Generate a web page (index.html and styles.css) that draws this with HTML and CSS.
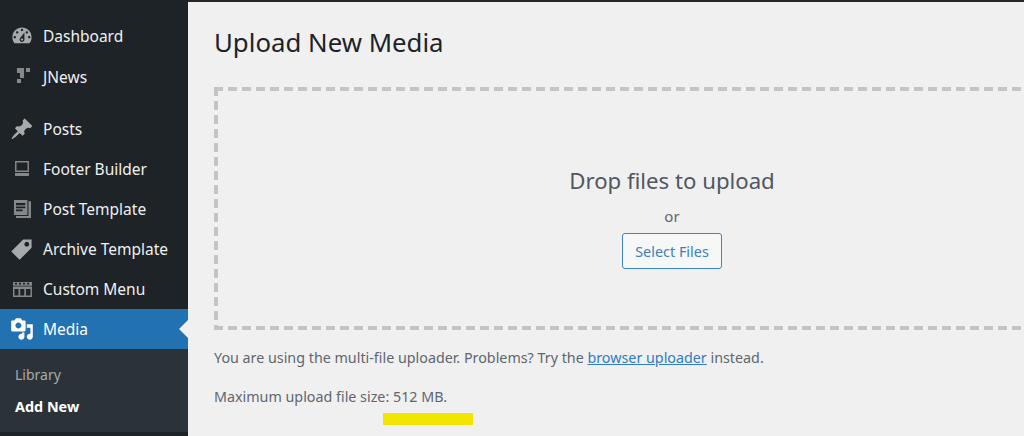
FILE: index.html

```html
<!DOCTYPE html>
<html lang="en">
<head>
    <meta charset="UTF-8">
    <meta name="viewport" content="width=device-width, initial-scale=1.0">
    <title>Upload New Media</title>
    <link rel="stylesheet" href="styles.css">
</head>
<body>
    <div class="page">
      <!-- admin menu -->
      <nav class="sidebar">
        <a class="menuItem firstItem">
          <svg class="menuIcon" viewBox="0 0 20 20"><path fill-rule="evenodd" d="M3.76 16h12.48c1.1-1.37 1.76-3.11 1.76-5 0-4.42-3.58-8-8-8s-8 3.58-8 8c0 1.89.66 3.63 1.76 5zM10 4c.55 0 1 .45 1 1s-.45 1-1 1-1-.45-1-1 .45-1 1-1zM6 6c.55 0 1 .45 1 1s-.45 1-1 1-1-.45-1-1 .45-1 1-1zm8 0c.55 0 1 .45 1 1s-.45 1-1 1-1-.45-1-1 .45-1 1-1zm-5.37 5.55L12 7v6c0 1.1-.9 2-2 2s-2-.9-2-2c0-.57.24-1.08.63-1.45zM4 10c.55 0 1 .45 1 1s-.45 1-1 1-1-.45-1-1 .45-1 1-1zm12 0c.55 0 1 .45 1 1s-.45 1-1 1-1-.45-1-1 .45-1 1-1zm-5 3c0-.55-.45-1-1-1s-1 .45-1 1 .45 1 1 1 1-.45 1-1z"/></svg>
          <span>Dashboard</span>
        </a>
        <a class="menuItem jnewsItem">
          <svg class="menuIcon dimIcon" viewBox="0 0 20 20"><path d="M5.800 2.500h5.900v8.300H8.300V6.700H5.800zM13.300 2.500h3.400v3.300h-3.400zM5.800 11.700h3.400V15H5.800z"/></svg>
          <span>JNews</span>
        </a>
        <a class="menuItem postsItem">
          <svg class="menuIcon" viewBox="0 0 20 20"><path d="M10.44 3.02l1.82-1.82 6.36 6.35-1.83 1.82c-1.05-.68-2.48-.57-3.41.36l-.75.75c-.92.93-1.04 2.35-.35 3.41l-1.83 1.82-2.41-2.41-2.8 2.79c-.42.42-3.38 2.71-3.8 2.29s1.86-3.39 2.28-3.81l2.79-2.79L4.1 9.36l1.83-1.82c1.05.69 2.48.57 3.4-.36l.75-.75c.93-.92 1.05-2.35.36-3.41z"/></svg>
          <span>Posts</span>
        </a>
        <a class="menuItem">
          <svg class="menuIcon dimIcon" viewBox="0 0 20 20"><path fill-rule="evenodd" d="M4.200 3.300h11.600v9.200H4.200zM5.400 4.500v6.800h9.200V4.500zM4.200 13.300h11.600v2.500H4.200z"/></svg>
          <span>Footer Builder</span>
        </a>
        <a class="menuItem">
          <svg class="menuIcon dimIcon" viewBox="0 0 20 20"><path fill-rule="evenodd" d="M3.300 2.500h11.200v12.500H3.300zM5 5v1.800h7.800V5zM5 8v1.300h7.800V8zM5 10.500v1.300h5.500v-1.300zM15.400 3.500h2.100v14H5v-1.600h10.400z"/></svg>
          <span>Post Template</span>
        </a>
        <a class="menuItem">
          <svg class="menuIcon" viewBox="0 0 20 20"><path fill-rule="evenodd" d="M11 2h7v7L8 19l-7-7zm3 6c1.100 0 2-.9 2-2s-.9-2-2-2-2 .9-2 2 .9 2 2 2z"/></svg>
          <span>Archive Template</span>
        </a>
        <a class="menuItem">
          <svg class="menuIcon dimIcon" viewBox="0 0 20 20"><path fill-rule="evenodd" d="M2.500 4.200h15.800v3H2.500zM4 4.800v1.400h1.800V4.800zM7.400 4.800v1.400h1.800V4.800zM10.800 4.800v1.400h1.800V4.800zM14.200 4.800v1.400H16V4.800zM2.500 8h15.800v8.700H2.500zM3.700 10v5.400h3.400V10zM8.500 10v5.400h3.400V10zM13.300 10v5.400h3.800V10z"/></svg>
          <span>Custom Menu</span>
        </a>
        <a class="menuItem currentItem">
          <svg class="menuIcon" viewBox="0 0 20 20"><path fill-rule="evenodd" d="M13 11V4c0-.55-.45-1-1-1h-1.670L9 1H5L3.670 3H2c-.55 0-1 .45-1 1v7c0 .55.45 1 1 1h10c.55 0 1-.45 1-1zM7 4.500c1.380 0 2.500 1.120 2.500 2.500S8.380 9.500 7 9.500 4.500 8.380 4.500 7 5.620 4.500 7 4.500zM14 6h5v10.500c0 1.380-1.120 2.500-2.500 2.500S14 17.880 14 16.500s1.120-2.500 2.500-2.500c.17 0 .34.02.5.05V9h-3V6zm-4 8.050V13h2v3.500c0 1.380-1.120 2.500-2.500 2.500S7 17.880 7 16.500 8.120 14 9.500 14c.17 0 .34.02.5.05z"/></svg>
          <span>Media</span>
        </a>
        <div class="subMenu">
          <a class="subItem">Library</a>
          <a class="subItem currentSub">Add New</a>
        </div>
      </nav>

      <main class="content">
        <h1 class="pageTitle">Upload New Media</h1>
        <div class="dropZone">
          <p class="dropText">Drop files to upload</p>
          <p class="orText">or</p>
          <button class="selectBtn">Select Files</button>
        </div>
        <p class="info firstInfo">You are using the multi-file uploader. Problems? Try the <a class="infoLink">browser uploader</a> instead.</p>
        <p class="info">Maximum upload file size: 512 MB.</p>
        <div class="marker"></div>
      </main>
    </div>
</body>
</html>
```

FILE: styles.css

```css
html, body {
  height: 100%;
}
body {
  margin: 0;
  overflow: hidden;
  background: #f0f0f1;
  font-family: "Noto Sans", "Open Sans", sans-serif;
}
.page {
  display: flex;
  height: 436px;
  overflow: hidden;
}

/* sidebar */
.sidebar {
  flex: 0 0 188px;
  width: 188px;
  background: #1d2327;
  color: #f0f0f1;
}
.menuItem {
  display: flex;
  align-items: center;
  gap: 9px;
  height: 40px;
  padding-left: 10px;
  font-size: 15.5px;
  color: #f0f0f1;
}
.firstItem {
  margin-top: 16px;
}
.jnewsItem {
  margin-top: 1px;
}
.postsItem {
  margin-top: 12px;
}
.menuIcon {
  flex: 0 0 24px;
  width: 24px;
  height: 24px;
  fill: #a7aaad;
}
.dimIcon {
  fill: #85888b;
}
.currentItem {
  position: relative;
  background: #2271b1;
  color: #fff;
}
.currentItem .menuIcon {
  fill: #fff;
}
.currentItem::after {
  content: "";
  position: absolute;
  right: 0;
  top: 11px;
  border: 9px solid transparent;
  border-right-color: #f0f0f1;
  border-left-width: 0;
}
.subMenu {
  display: flex;
  flex-direction: column;
  gap: 10px;
  height: 83px;
  box-sizing: border-box;
  padding: 15px 0 0 15px;
  background: #2c3338;
}
.subItem {
  line-height: 22px;
  font-size: 14px;
  color: #a7aaad;
}
.currentSub {
  color: #fff;
  font-size: 14.4px;
  font-weight: 700;
}

/* main */
.content {
  flex: 1;
  min-width: 0;
  padding-left: 26px;
  border-top: 2px solid #23282d;
}
.pageTitle {
  margin: 20px 0 0;
  line-height: 40px;
  font-size: 25.8px;
  font-weight: 400;
  color: #1d2327;
}
.dropZone {
  display: flex;
  flex-direction: column;
  align-items: center;
  box-sizing: border-box;
  width: 916px;
  height: 243px;
  margin-top: 25px;
  padding-top: 78px;
  background:
    linear-gradient(90deg, #c3c4c7 9px, transparent 9px) left top / 14px 4px repeat-x,
    linear-gradient(90deg, #c3c4c7 9px, transparent 9px) left bottom / 14px 4px repeat-x,
    linear-gradient(#c3c4c7 9px, transparent 9px) left top / 4px 14px repeat-y,
    linear-gradient(#c3c4c7 9px, transparent 9px) right top / 4px 14px repeat-y;
}
.dropText {
  margin: 0;
  line-height: 32px;
  font-size: 22.2px;
  color: #50575e;
}
.orText {
  margin: 9px 0 0;
  line-height: 20px;
  font-size: 15px;
  color: #5f666d;
}
.selectBtn {
  width: 100px;
  height: 36px;
  margin-top: 7px;
  padding: 0;
  border: 1px solid #3f86c0;
  border-radius: 3px;
  background: #f6f7f7;
  color: #3f80b8;
  font-family: inherit;
  font-size: 14.4px;
}
.info {
  margin: 0;
  line-height: 20px;
  font-size: 14.3px;
  color: #5f666d;
}
.firstInfo {
  margin-top: 18px;
  margin-bottom: 19px;
}
.infoLink {
  color: #2f7dbd;
  text-decoration: underline;
}
.marker {
  width: 90px;
  height: 12px;
  margin: 6px 0 0 169px;
  background: #f2e600;
}
```
